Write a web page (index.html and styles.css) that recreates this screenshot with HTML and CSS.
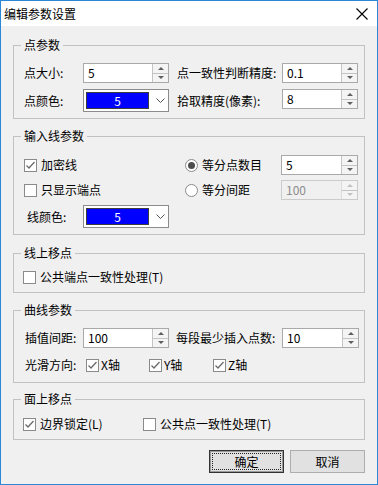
FILE: index.html
```html
<!DOCTYPE html>
<html lang="zh">
	<head>
		<meta charset="utf-8">
		<meta name="viewport" content="width=device-width, initial-scale=1.0">
		<title>编辑参数设置</title>
		<link rel="stylesheet" href="styles.css">
	</head>

	<body>
		<div class="window">
			<div class="titlebar">
				<span>编辑参数设置</span>
				<svg class="close" width="12" height="12" viewBox="0 0 12 12"><path d="M0.5 0.5L11.5 11.5M11.5 0.5L0.5 11.5" stroke="#000" stroke-width="1.1" fill="none"/></svg>
			</div>

			<div class="content">
				<fieldset class="group">
					<legend>点参数</legend>
					<div class="g-point">
						<label>点大小:</label>
						<div class="spin"><span class="val">5</span><span class="arrows"><span><i class="up"></i></span><span><i class="down"></i></span></span></div>
						<span></span>
						<label>点一致性判断精度:</label>
						<div class="spin"><span class="val">0.1</span><span class="arrows"><span><i class="up"></i></span><span><i class="down"></i></span></span></div>

						<label>点颜色:</label>
						<div class="color"><span class="swatch">5</span><svg class="chev" width="9" height="5" viewBox="0 0 9 5"><path d="M0.5 0.5L4.5 4.5L8.5 0.5" stroke="#555" fill="none"/></svg></div>
						<span></span>
						<label>拾取精度(像素):</label>
						<div class="spin"><span class="val">8</span><span class="arrows"><span><i class="up"></i></span><span><i class="down"></i></span></span></div>
					</div>
				</fieldset>

				<fieldset class="group">
					<legend>输入线参数</legend>
					<div class="g-line">
						<div class="opt"><span class="cb on"><svg width="11" height="11" viewBox="0 0 11 11"><path d="M1.5 5.5L4 8L9.5 2" stroke="#6b6b6b" stroke-width="1.3" fill="none"/></svg></span>加密线</div>
						<div class="opt"><span class="rb on"></span>等分点数目</div>
						<div class="spin"><span class="val">5</span><span class="arrows"><span><i class="up"></i></span><span><i class="down"></i></span></span></div>

						<div class="opt"><span class="cb"></span>只显示端点</div>
						<div class="opt"><span class="rb"></span>等分间距</div>
						<div class="spin off"><span class="val">100</span><span class="arrows"><span><i class="up"></i></span><span><i class="down"></i></span></span></div>

						<div class="colorrow">
							<label>线颜色:</label>
							<div class="color"><span class="swatch">5</span><svg class="chev" width="9" height="5" viewBox="0 0 9 5"><path d="M0.5 0.5L4.5 4.5L8.5 0.5" stroke="#555" fill="none"/></svg></div>
						</div>
					</div>
				</fieldset>

				<fieldset class="group">
					<legend>线上移点</legend>
					<div class="g-single">
						<div class="opt"><span class="cb"></span>公共端点一致性处理(T)</div>
					</div>
				</fieldset>

				<fieldset class="group">
					<legend>曲线参数</legend>
					<div class="g-curve">
						<label>插值间距:</label>
						<div class="spin"><span class="val">100</span><span class="arrows"><span><i class="up"></i></span><span><i class="down"></i></span></span></div>
						<span></span>
						<label>每段最少插入点数:</label>
						<div class="spin"><span class="val">10</span><span class="arrows"><span><i class="up"></i></span><span><i class="down"></i></span></span></div>

						<label>光滑方向:</label>
						<div class="axes">
							<div class="opt tight"><span class="cb on"><svg width="11" height="11" viewBox="0 0 11 11"><path d="M1.5 5.5L4 8L9.5 2" stroke="#6b6b6b" stroke-width="1.3" fill="none"/></svg></span>X轴</div>
							<div class="opt tight"><span class="cb on"><svg width="11" height="11" viewBox="0 0 11 11"><path d="M1.5 5.5L4 8L9.5 2" stroke="#6b6b6b" stroke-width="1.3" fill="none"/></svg></span>Y轴</div>
							<div class="opt tight"><span class="cb on"><svg width="11" height="11" viewBox="0 0 11 11"><path d="M1.5 5.5L4 8L9.5 2" stroke="#6b6b6b" stroke-width="1.3" fill="none"/></svg></span>Z轴</div>
						</div>
					</div>
				</fieldset>

				<fieldset class="group">
					<legend>面上移点</legend>
					<div class="g-single g-surf">
						<div class="opt"><span class="cb on"><svg width="11" height="11" viewBox="0 0 11 11"><path d="M1.5 5.5L4 8L9.5 2" stroke="#6b6b6b" stroke-width="1.3" fill="none"/></svg></span>边界锁定(L)</div>
						<div class="opt"><span class="cb"></span>公共点一致性处理(T)</div>
					</div>
				</fieldset>

				<div class="buttons">
					<button class="btn default">确定</button>
					<button class="btn">取消</button>
				</div>
			</div>
		</div>
	</body>
</html>
```

FILE: styles.css
```css
body{
	margin: 0;
	font-family: "Noto Sans CJK SC", "Microsoft YaHei", sans-serif;
	font-size: 12px;
	line-height: 16px;
	color: #000;
	background: #fff;
}
.window{
	box-sizing: border-box;
	width: 378px;
	height: 485px;
	border: 1px solid #2b88d8;
	background: #f0f0f0;
	display: flex;
	flex-direction: column;
}
.titlebar{
	height: 25px;
	background: #fff;
	display: flex;
	align-items: center;
	justify-content: space-between;
	padding: 0 9px 0 3px;
}
.content{
	padding: 0 12px;
}

/* group boxes */
.group{
	margin: 0;
	margin-top: 9px;
	padding: 0;
	min-width: 0;
	border: 1px solid #c2c2c2;
}
.group:first-child{
	margin-top: 11px;
}
.group:nth-child(3){
	margin-top: 10px;
}
.group:nth-child(5){
	margin-top: 8px;
}
.group legend{
	margin-left: 7px;
	padding: 0 3px;
	line-height: 16px;
}

label{
	white-space: nowrap;
}

/* spin edit */
.spin{
	box-sizing: border-box;
	height: 20px;
	border: 1px solid #a9a9a9;
	background: #fff;
	display: flex;
	align-self: start;
}
.spin .val{
	flex: 1;
	padding-left: 4px;
	line-height: 18px;
}
.spin .arrows{
	width: 15px;
	border-left: 1px solid #c4c4c4;
	background: #f4f4f4;
	display: flex;
	flex-direction: column;
}
.spin .arrows span{
	flex: 1;
	display: flex;
	align-items: center;
	justify-content: center;
}
.spin .arrows span + span{
	border-top: 1px solid #c4c4c4;
}
.up{
	border-left: 3px solid transparent;
	border-right: 3px solid transparent;
	border-bottom: 3px solid #5f5f5f;
}
.down{
	border-left: 3px solid transparent;
	border-right: 3px solid transparent;
	border-top: 3px solid #5f5f5f;
}
.spin.off{
	border-color: #cbcbcb;
	background: #f0f0f0;
	color: #8d8d8d;
}
.spin.off .arrows{
	border-left-color: #dcdcdc;
}
.spin.off .up{
	border-bottom-color: #c2c2c2;
}
.spin.off .down{
	border-top-color: #c2c2c2;
}

/* colour combo */
.color{
	box-sizing: border-box;
	width: 86px;
	height: 23px;
	border: 1px solid #8c8c8c;
	background: #fff;
	display: flex;
	align-items: center;
	padding-left: 2px;
}
.swatch{
	box-sizing: border-box;
	width: 63px;
	height: 17px;
	border: 1px solid #3c3c3c;
	background: #0000ff;
	color: #fff;
	text-align: center;
	line-height: 15px;
}
.chev{
	margin-left: 7px;
}

/* check + radio */
.opt{
	display: flex;
	align-items: center;
	gap: 4px;
	white-space: nowrap;
}
.opt.tight{
	gap: 2px;
}
.cb{
	box-sizing: border-box;
	width: 13px;
	height: 13px;
	border: 1px solid #8a8a8a;
	background: #fff;
	display: flex;
	align-items: center;
	justify-content: center;
}
.rb{
	box-sizing: border-box;
	width: 13px;
	height: 13px;
	border: 1px solid #8a8a8a;
	border-radius: 50%;
	background: #fff;
	display: flex;
	align-items: center;
	justify-content: center;
}
.rb.on::after{
	content: "";
	width: 7px;
	height: 7px;
	border-radius: 50%;
	background: #4d4d4d;
}

/* group layouts */
.g-point{
	display: grid;
	grid-template-columns: 59px 86px 8px 105px 76px;
	grid-template-rows: 20px 23px;
	row-gap: 6px;
	align-items: center;
	padding: 10px 0 6px 10px;
}
.g-line{
	display: grid;
	grid-template-columns: 161px 96px 77px;
	grid-template-rows: 20px 20px 23px;
	row-gap: 5px;
	align-items: center;
	padding: 11px 0 6px 10px;
}
.colorrow{
	display: flex;
	align-items: center;
}
.colorrow label{
	width: 56px;
	padding-left: 3px;
}
.g-single{
	display: flex;
	height: 20px;
	align-items: center;
	padding: 6px 0 5px 9px;
}
.g-surf{
	padding: 7px 0 5px 9px;
}
.g-surf .opt:first-child{
	width: 120px;
}
.g-curve{
	display: grid;
	grid-template-columns: 58px 86px 7px 106px 77px;
	grid-template-rows: 20px 20px;
	row-gap: 7px;
	align-items: center;
	padding: 10px 0 7px 11px;
}
.axes{
	grid-column: 2 / 6;
	display: flex;
	padding-left: 3px;
}
.axes .opt{
	width: 63px;
}
.axes .opt + .opt{
	width: 64px;
}

/* buttons */
.buttons{
	display: flex;
	justify-content: flex-end;
	gap: 6px;
	margin-top: 10px;
}
.btn{
	box-sizing: border-box;
	width: 75px;
	height: 23px;
	padding: 0;
	border: 1px solid #adadad;
	background: #e1e1e1;
	font: inherit;
	color: #000;
}
.btn.default{
	border: 1px solid #333;
	box-shadow: inset 0 0 0 1px #9a9a9a;
	outline: 1px dotted #222;
	outline-offset: -4px;
}
```
